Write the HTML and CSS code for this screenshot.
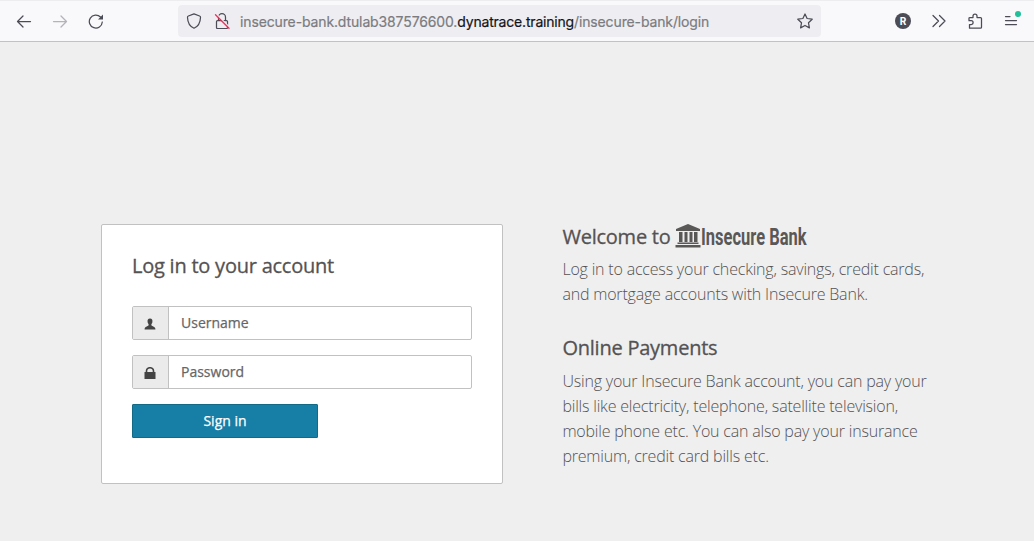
FILE: index.html
```
<!DOCTYPE html>
<html lang="en">
<head>
<meta charset="utf-8">
<title>Insecure Bank</title>
<link rel="stylesheet" href="styles.css">
</head>
<body>
<header class="toolbar">
  <nav class="history">
    <svg class="icon" viewBox="0 0 16 16"><path d="M14.500 8.500H1.500M7 3L1.500 8.500L7 14"/></svg>
    <svg class="icon faded" viewBox="0 0 16 16"><path d="M1.500 8.500H14.500M9 3L14.500 8.500L9 14"/></svg>
    <svg class="icon" viewBox="0 0 16 16"><path d="M14.300 9A6.500 6.500 0 1 1 12.500 4"/><path class="solid" d="M15 1.500V6.500H10z"/></svg>
  </nav>
  <div class="address">
    <svg class="icon" viewBox="0 0 16 16"><path d="M8 .9L13.600 3Q14.600 3.400 14.500 4.400Q14.200 12.500 8 15.200Q1.800 12.500 1.500 4.400Q1.400 3.400 2.400 3z"/></svg>
    <svg class="icon lock" viewBox="0 0 16 16"><path d="M4.500 7V4.200A3.500 3.500 0 0 1 11.500 4.200V7M3.500 7.500H12.500Q13.500 7.500 13.500 8.500V14.500Q13.500 15.500 12.500 15.500H3.500Q2.500 15.500 2.500 14.500V8.500Q2.500 7.500 3.500 7.500z"/><path class="halo" d="M2.800 1.500L16 14.700"/><path class="slash" d="M1.500 1.800L15 15.200"/></svg>
    <span class="url">insecure-bank.dtulab387576600.<b>dynatrace.training</b>/insecure-bank/login</span>
    <svg class="icon star" viewBox="0 0 16 16"><path d="M8 1L10.100 5.500L15.200 6.200L11.500 9.800L12.400 14.900L8 12.500L3.600 14.900L4.500 9.800L.8 6.200L5.900 5.500z"/></svg>
  </div>
  <div class="actions">
    <span class="avatar">R</span>
    <svg class="icon" viewBox="0 0 16 16"><path d="M2 2.500L7.500 8L2 13.500M8.500 2.500L14 8L8.500 13.500"/></svg>
    <svg class="icon" viewBox="0 0 16 16"><path d="M2.500 15.200V11.500H4.200A1.900 1.900 0 0 0 4.200 7.700H2V5Q2 4.500 3 4.500H6V3A2 2 0 0 1 10 3V4.500H13.500Q14.500 4.500 14.500 5.500V14.200Q14.500 15.200 13.500 15.200z"/></svg>
    <span class="menu"><svg class="icon" viewBox="0 0 16 16"><path d="M2.500 3.500H7M2.500 7.500H13.500M2.500 11.500H13.500"/></svg><i class="badge"></i></span>
  </div>
</header>
<main class="page">
  <form class="login">
    <h2 class="heading">Log in to your account</h2>
    <label class="field">
      <span class="addon"><svg viewBox="0 0 12 12"><path d="M6 .6C4 .6 3.300 2 3.600 4C3.800 5.400 4.600 6 4.700 6.800C4.800 8.300 1 8.300 .6 10.800V11.400H11.400V10.800C11 8.300 7.200 8.300 7.300 6.800C7.400 6 8.200 5.400 8.400 4C8.700 2 8 .6 6 .6z"/></svg></span>
      <input class="input" type="text" placeholder="Username">
    </label>
    <label class="field">
      <span class="addon"><svg viewBox="0 0 12 12"><path fill-rule="evenodd" d="M1.700 5V3.900A4.300 4 0 0 1 10.300 3.900V5H11.500V12H.5V5zM3.300 5H8.700V3.900A2.700 2.500 0 0 0 3.300 3.900z"/></svg></span>
      <input class="input" type="text" placeholder="Password">
    </label>
    <button class="submit" type="button">Sign in</button>
  </form>
  <section class="info">
    <h2 class="heading welcome">Welcome to
      <svg class="bank" viewBox="0 0 26 24"><path d="M13 0L25 5V7H1V5zM4 8H7.500V18H4zM9.500 8H12.500V18H9.500zM14.500 8H17.500V18H14.500zM19 8H22.500V18H19zM2.500 18.500H23.500V20H2.500zM.5 21H25.500V23.500H.5z"/></svg>
      <span class="brand">Insecure Bank</span></h2>
    <p class="copy">Log in to access your checking, savings, credit cards,<br>and mortgage accounts with Insecure Bank.</p>
    <h2 class="heading payments">Online Payments</h2>
    <p class="copy">Using your Insecure Bank account, you can pay your<br>bills like electricity, telephone, satellite television,<br>mobile phone etc. You can also pay your insurance<br>premium, credit card bills etc.</p>
  </section>
</main>
</body>
</html>
```
FILE: styles.css
```
* { box-sizing: border-box; }
body {
  margin: 0;
  height: 541px;
  overflow: hidden;
  background: #efefef;
  color: #555253;
  font-family: "Open Sans", sans-serif;
}
.toolbar {
  display: flex;
  align-items: center;
  height: 42px;
  padding-left: 16px;
  background: #f9f9fb;
  border-top: 1px solid #ededf0;
  border-bottom: 1px solid #c2c2c6;
}
.icon {
  display: block;
  flex: none;
  width: 16px;
  height: 16px;
  fill: none;
  stroke: #4c4c57;
  stroke-width: 1.250;
  stroke-linecap: round;
  stroke-linejoin: round;
}
.icon .solid { fill: #4c4c57; stroke: none; }
.icon .halo { stroke: #ededf2; stroke-width: 1.300; }
.icon .slash { stroke: #f03058; stroke-width: 1.300; }
.faded { opacity: .4; }
.history { display: flex; gap: 20px; width: 162px; }
.address {
  display: flex;
  align-items: center;
  width: 643px;
  height: 32px;
  padding: 0 8px;
  background: #eeeef2;
  border-radius: 4px;
}
.lock { margin-left: 12px; }
.url {
  margin: 2px 0 0 10px;
  color: #7b7b80;
  font: 14px/20px Inter, sans-serif;
  letter-spacing: -.13px;
  white-space: nowrap;
  -webkit-text-stroke: .2px;
}
.url b { color: #15141a; font-weight: 400; letter-spacing: -.19px; }
.star { margin-left: auto; }
.actions { display: flex; gap: 20px; margin-left: 74px; }
.avatar {
  width: 16px;
  height: 16px;
  border-radius: 50%;
  background: #4c4c57;
  color: #fff;
  font: 700 10px/16px Inter, sans-serif;
  text-align: center;
}
.menu { position: relative; }
.badge {
  position: absolute;
  top: -2px;
  right: -2px;
  width: 6px;
  height: 6px;
  border-radius: 50%;
  background: #20c09b;
}
.page {
  display: flex;
  align-items: flex-start;
  gap: 59px;
  padding: 182px 0 0 101px;
}
.login {
  width: 402px;
  height: 260px;
  padding: 27px 30px;
  background: #fff;
  border: 1px solid #c1c1c1;
  border-radius: 2px;
}
.heading {
  margin: 0;
  font-size: 20px;
  line-height: 28px;
  font-weight: 400;
  letter-spacing: -.23px;
  white-space: nowrap;
  -webkit-text-stroke: .3px;
}
.login .heading { margin-bottom: 26px; }
.field {
  display: flex;
  height: 34px;
  margin-bottom: 15px;
  border: 1px solid #c1c1c1;
  border-radius: 2px;
}
.addon {
  display: flex;
  align-items: center;
  justify-content: center;
  width: 36px;
  background: #ebebeb;
  border-right: 1px solid #c1c1c1;
}
.addon svg { width: 12px; height: 12px; margin: 2px 1px 0 0; fill: #444; }
.input {
  flex: 1;
  min-width: 0;
  padding: 0 12px 2px;
  border: 0;
  background: transparent;
  color: #666;
  font: 14px "Open Sans", sans-serif;
  -webkit-text-stroke: .25px;
}
.input::placeholder { color: #666; opacity: 1; }
.submit {
  display: block;
  width: 186px;
  height: 34px;
  padding: 0 0 2px;
  border: 1px solid #126a86;
  border-radius: 1px;
  background: #177ea6;
  color: #fff;
  font: 14px "Open Sans", sans-serif;
  -webkit-text-stroke: .25px;
}
.welcome { display: flex; align-items: center; height: 25px; }
.bank { width: 26px; height: 24px; margin: -1px 0 0 4px; fill: #5a5757; }
.brand {
  width: 106px;
  color: #5a5757;
  transform: scale(.75, 1.080);
  transform-origin: left;
  font: 700 22px/28px Roboto, sans-serif;
  letter-spacing: 0;
  -webkit-text-stroke: 0;
}
.copy {
  margin: 8px 0 27px;
  color: #555253;
  font-size: 16px;
  font-weight: 300;
  letter-spacing: -.19px;
  line-height: 25px;
  white-space: nowrap;
}
.info { padding-left: .4px; }
.payments + .copy { margin-top: 7px; }
```
